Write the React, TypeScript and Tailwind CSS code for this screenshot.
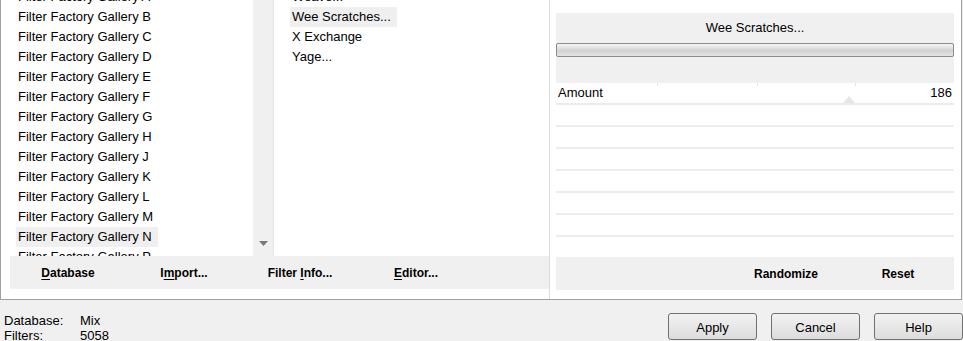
import React from 'react';

const galleries = ['A', 'B', 'C', 'D', 'E', 'F', 'G', 'H', 'J', 'K', 'L', 'M', 'N', 'P'];
const filters = ['Weave...', 'Wee Scratches...', 'X Exchange', 'Yage...'];

// letter with a mnemonic underline, like the old win32 buttons
function Mnemonic({ before = '', letter, after = '' }: { before?: string; letter: string; after?: string }) {
  return (
    <span>
      {before}
      <span className="underline underline-offset-2">{letter}</span>
      {after}
    </span>
  );
}

function DialogButton({ label }: { label: string }) {
  return (
    <button className="w-[89px] h-[27px] pt-[2px] rounded-[3px] border border-[#707070] bg-gradient-to-b from-[#f2f2f2] to-[#dddddd] text-[13px] text-black">
      {label}
    </button>
  );
}

export default function App() {
  const rows = [0, 1, 2, 3, 4, 5, 6];

  return (
    <div className="w-[963px] h-[341px] overflow-hidden bg-[#f0f0f0] text-black" style={{ fontFamily: '"Liberation Sans", Arial, sans-serif' }}>
      {/* group frame */}
      <div className="w-[962px] h-[300px] bg-white border-l border-r border-b border-[#a0a0a0] flex">
        {/* left: category + filter lists */}
        <div className="w-[549px] flex flex-col border-r border-[#dcdcdc]">
          <div className="h-[256px] flex">
            <div className="w-[252px] overflow-hidden">
              <div className="-mt-[13px] text-[13px]">
                {galleries.map(g => (
                  <div key={g} className="h-[20px] flex items-center">
                    <span className={`ml-[15px] pl-[2px] pr-[6px] h-[20px] leading-[20px] ${g === 'N' ? 'bg-[#efefef]' : ''}`}>
                      Filter Factory Gallery {g}
                    </span>
                  </div>
                ))}
              </div>
            </div>
            <div className="w-[20px] bg-[#f0f0f0] flex flex-col justify-end items-center pb-[10px]">
              <svg width="9" height="5" viewBox="0 0 9 5">
                <path d="M0 0 H9 L4.5 5 Z" fill="#7a7a7a" />
              </svg>
            </div>
            <div className="w-[7px] border-l border-[#e6e6e6]" />
            <div className="flex-1 overflow-hidden">
              <div className="-mt-[13px] text-[13px]">
                {filters.map(f => (
                  <div key={f} className="h-[20px] flex items-center">
                    <span className={`ml-[10px] pl-[2px] pr-[6px] h-[20px] leading-[20px] ${f === 'Wee Scratches...' ? 'bg-[#efefef]' : ''}`}>
                      {f}
                    </span>
                  </div>
                ))}
              </div>
            </div>
          </div>
          <div className="ml-[9px] h-[33px] pt-[1px] bg-[#f0f0f0] flex items-center text-[12px] font-bold">
            <div className="w-[116px] text-center"><Mnemonic letter="D" after="atabase" /></div>
            <div className="w-[116px] text-center"><Mnemonic before="I" letter="m" after="port..." /></div>
            <div className="w-[116px] text-center"><Mnemonic before="Filter " letter="I" after="nfo..." /></div>
            <div className="w-[116px] text-center"><Mnemonic letter="E" after="ditor..." /></div>
          </div>
        </div>

        {/* right: filter controls */}
        <div className="flex-1 flex flex-col pt-[13px] pl-[6px] pr-[7px]">
          <div className="h-[70px] bg-[#f0f0f0] flex flex-col">
            <div className="h-[30px] flex items-center justify-center text-[13px]">Wee Scratches...</div>
            <div className="h-[14px] rounded-[2px] border border-[#8c8c8c] bg-[linear-gradient(to_bottom,#f6f6f6,#d2d2d2_55%,#e4e4e4)]" />
          </div>
          {rows.map(i => (
            <div key={i} className="relative h-[22px] border-b-2 border-[#ececec] flex items-center justify-between px-[2px] text-[13px]">
              {i === 0 && (
                <>
                  <span>Amount</span>
                  <span>186</span>
                  <div className="absolute top-0 left-[101px] w-px h-[3px] bg-[#e4e4e4]" />
                  <div className="absolute top-0 left-[201px] w-px h-[3px] bg-[#e4e4e4]" />
                  <div className="absolute top-0 left-[299px] w-px h-[3px] bg-[#e4e4e4]" />
                  <svg className="absolute left-[287px] top-[12px]" width="12" height="8" viewBox="0 0 12 8">
                    <path d="M0 8 L6 1 L12 8 Z" fill="#e6e6e6" />
                  </svg>
                </>
              )}
            </div>
          ))}
          <div className="h-[20px]" />
          <div className="h-[33px] pt-[1px] bg-[#f0f0f0] flex justify-end items-center text-[12px] font-bold">
            <div className="w-[112px] text-center">Randomize</div>
            <div className="w-[112px] text-center">Reset</div>
          </div>
        </div>
      </div>

      {/* status + dialog buttons */}
      <div className="flex justify-between">
        <div className="pl-[4px] pt-[13px] text-[13px] leading-[15px]">
          <div className="flex"><span className="w-[76px]">Database:</span><span>Mix</span></div>
          <div className="flex"><span className="w-[76px]">Filters:</span><span>5058</span></div>
        </div>
        <div className="flex gap-[14px] pt-[13px]">
          <DialogButton label="Apply" />
          <DialogButton label="Cancel" />
          <DialogButton label="Help" />
        </div>
      </div>
    </div>
  );
}
